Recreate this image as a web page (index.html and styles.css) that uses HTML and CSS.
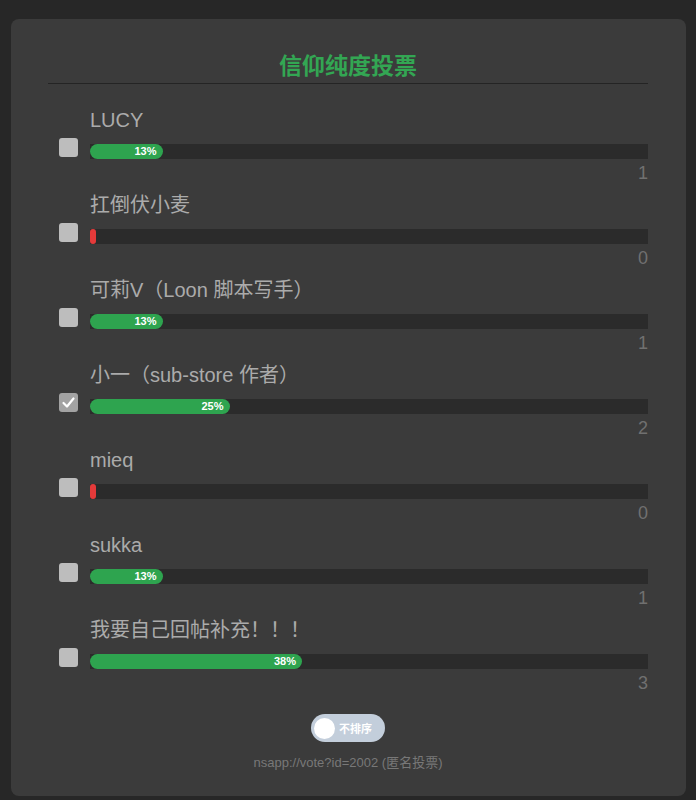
FILE: index.html
```html
<!DOCTYPE html>
<html lang="zh-CN">
<head>
  <meta charset="UTF-8" />
  <meta name="viewport" content="width=device-width, initial-scale=1.0"/>
  <title>信仰纯度投票</title>
  <link rel="stylesheet" href="styles.css">
</head>
<body>

  <div class="card">
    <h2 class="title">信仰纯度投票</h2>

    <div class="options">
      <div class="option">
        <div class="label">LUCY</div>
        <span class="box"></span>
        <div class="track"><div class="fill" style="width:13%">13%</div></div>
        <div class="count">1</div>
      </div>

      <div class="option">
        <div class="label">扛倒伏小麦</div>
        <span class="box"></span>
        <div class="track"><div class="fill zero"></div></div>
        <div class="count">0</div>
      </div>

      <div class="option">
        <div class="label">可莉V（Loon 脚本写手）</div>
        <span class="box"></span>
        <div class="track"><div class="fill" style="width:13%">13%</div></div>
        <div class="count">1</div>
      </div>

      <div class="option">
        <div class="label">小一（sub-store 作者）</div>
        <span class="box checked">
          <svg viewBox="0 0 19 19" width="19" height="19"><path d="M4.5 10 L8 13.5 L14.5 5.5" fill="none" stroke="#fff" stroke-width="2.2" stroke-linecap="round" stroke-linejoin="round"/></svg>
        </span>
        <div class="track"><div class="fill" style="width:25%">25%</div></div>
        <div class="count">2</div>
      </div>

      <div class="option">
        <div class="label">mieq</div>
        <span class="box"></span>
        <div class="track"><div class="fill zero"></div></div>
        <div class="count">0</div>
      </div>

      <div class="option">
        <div class="label">sukka</div>
        <span class="box"></span>
        <div class="track"><div class="fill" style="width:13%">13%</div></div>
        <div class="count">1</div>
      </div>

      <div class="option">
        <div class="label">我要自己回帖补充！！！</div>
        <span class="box"></span>
        <div class="track"><div class="fill" style="width:38%">38%</div></div>
        <div class="count">3</div>
      </div>
    </div>

    <div class="switch-row">
      <div class="switch"><span class="knob"></span>不排序</div>
    </div>

    <p class="footer">nsapp://vote?id=2002 (匿名投票)</p>
  </div>

</body>
</html>
```

FILE: styles.css
```css
body {
  font-family: 'Liberation Sans', 'Noto Sans CJK SC', sans-serif;
  background-color: #272727;
  margin: 0;
  padding: 19px 10px 3px 11px;
}
.card {
  background-color: #3b3b3b;
  border-radius: 8px;
  padding: 33px 38px 25px 37px;
}
.title {
  margin: 0;
  font-size: 23px;
  line-height: 28px;
  font-weight: bold;
  color: #33a653;
  text-align: center;
  padding-bottom: 3px;
  border-bottom: 1px solid #242424;
}
.options {
  padding: 22px 0 0 11px;
}
.option {
  display: grid;
  grid-template-columns: 19px 1fr;
  column-gap: 12px;
  margin-bottom: 7px;
}
.label {
  grid-column: 2;
  font-size: 20px;
  line-height: 28px;
  color: #ababab;
  margin-bottom: 10px;
  white-space: nowrap;
}
.box {
  grid-column: 1;
  width: 19px;
  height: 19px;
  margin-top: -6px;
  border-radius: 3px;
  background-color: #bdbdbd;
}
.box.checked {
  background-color: #a3a3a3;
}
.box svg {
  display: block;
}
.track {
  grid-column: 2;
  height: 15px;
  background-color: #2b2b2b;
}
.fill {
  height: 15px;
  border-radius: 8px;
  background-color: #2ea44f;
  color: white;
  font-size: 11px;
  font-weight: bold;
  line-height: 15px;
  text-align: right;
  padding-right: 6px;
  box-sizing: border-box;
}
.fill.zero {
  width: 6px;
  padding: 0;
  background-color: #e53a3a;
}
.count {
  grid-column: 2;
  text-align: right;
  font-size: 18px;
  line-height: 22px;
  color: #707070;
  margin-top: 3px;
}
.switch-row {
  display: flex;
  justify-content: center;
  margin-top: 20px;
}
.switch {
  display: flex;
  align-items: center;
  gap: 4px;
  width: 74px;
  height: 28px;
  box-sizing: border-box;
  padding-left: 3px;
  border-radius: 14px;
  background-color: #c3cedb;
  color: white;
  font-size: 11px;
  font-weight: bold;
}
.knob {
  width: 21px;
  height: 21px;
  border-radius: 50%;
  background-color: white;
}
.footer {
  margin: 13px 0 0;
  text-align: center;
  font-size: 13px;
  line-height: 16px;
  color: #787878;
}
```
